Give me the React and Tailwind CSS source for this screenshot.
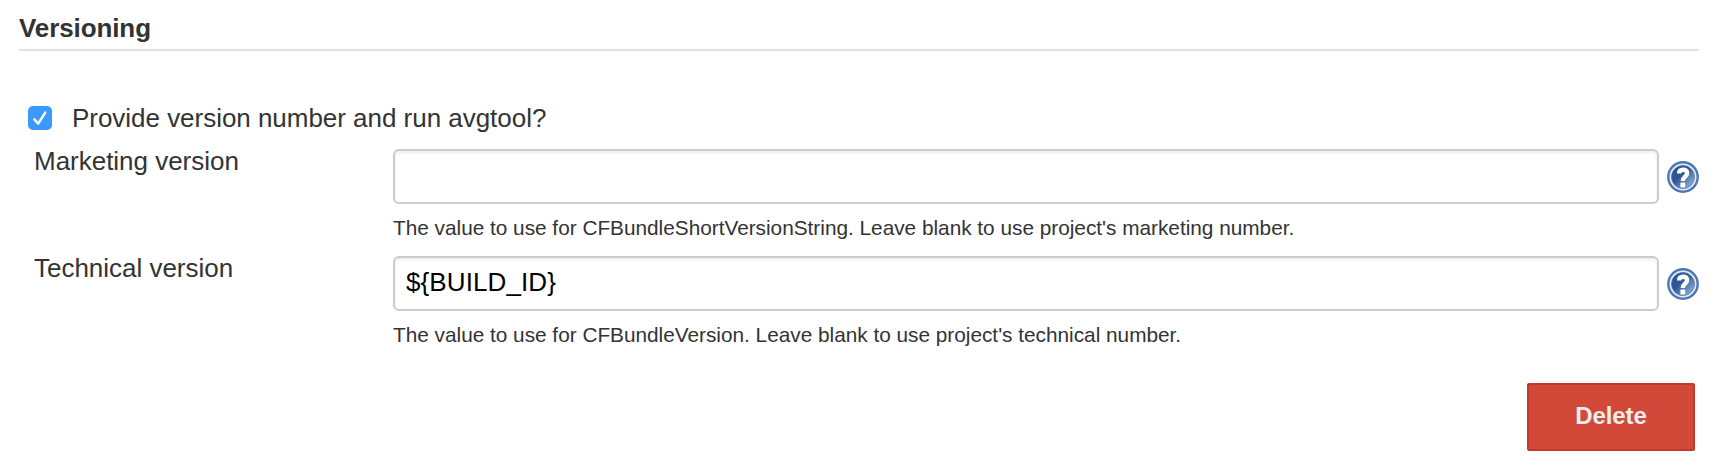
function HelpIcon({ id }) {
  return (
    <svg viewBox="0 0 32 32" className="block h-8 w-8">
      <defs>
        <linearGradient id={id} x1="0.1" y1="0.1" x2="0.9" y2="0.9">
          <stop offset="0" stopColor="#2c5291" />
          <stop offset="0.4" stopColor="#2f5795" />
          <stop offset="1" stopColor="#8fb2de" />
        </linearGradient>
      </defs>
      <circle cx="16" cy="16" r="14.7" fill="#e6edf7" stroke="#4f77b2" strokeWidth="2.4" />
      <circle cx="16" cy="16" r="11.5" fill={`url(#${id})`} stroke="#4a72ae" strokeWidth="0.8" />
      <path
        d="M12.1 12.6C12.1 9.8 13.8 8.8 16 8.8c2.6 0 4.1 1.3 4.1 3.5 0 3.4-4.3 3.4-4.3 7.6"
        fill="none"
        stroke="#fff"
        strokeWidth="4.4"
      />
      <rect x="13.4" y="21.6" width="4.8" height="4.8" rx="0.6" fill="#fff" />
    </svg>
  );
}

function VersionRow({ id, label, value, help }) {
  return (
    <div className="flex h-[107px] items-start">
      <label htmlFor={id} className="w-[359px] shrink-0 text-[26px] leading-8 tracking-[-0.02px] text-[#333]">
        {label}
      </label>
      <div className="w-[1266px] pt-1">
        <input
          id={id}
          defaultValue={value}
          className="block h-[55px] w-full rounded-[6px] border-2 border-[#ccc] bg-white px-[11px] pb-[3px] text-[26px] tracking-[0.1px] text-black shadow-[inset_0_2px_3px_rgba(0,0,0,0.075)] outline-none"
        />
        <p className="mt-[11px] text-[20.8px] leading-[26px] tracking-[-0.01px] whitespace-nowrap text-[#333]">{help}</p>
      </div>
      <div className="pt-4 pl-2">
        <HelpIcon id={`${id}-gradient`} />
      </div>
    </div>
  );
}

export default function App() {
  return (
    <main className="h-[472px] w-[1730px] overflow-hidden bg-white pr-[31px] pl-[19px] font-['Liberation_Sans',Arial,sans-serif]">
      <h2 className="h-[51px] border-b-2 border-[#e0e0e0] pt-3 text-[26px] leading-8 font-bold tracking-[-0.1px] text-[#333]">
        Versioning
      </h2>
      <div className="mt-[51px] flex h-[43px] items-start pl-[9px]">
        <span role="checkbox" aria-checked="true" className="mt-1 h-6 w-6 rounded-[5px] bg-[#3b99fc]">
          <svg viewBox="0 0 24 24" className="block h-6 w-6">
            <path
              d="M6.4 13.4l3.8 4.2L17.2 6.6"
              fill="none"
              stroke="#fff"
              strokeWidth="2.5"
              strokeLinecap="round"
              strokeLinejoin="round"
            />
          </svg>
        </span>
        <span className="pl-5 text-[26px] leading-8 tracking-[-0.03px] text-[#333]">
          Provide version number and run avgtool?
        </span>
      </div>
      <div className="pl-[15px]">
        <VersionRow
          id="marketing"
          label="Marketing version"
          value=""
          help="The value to use for CFBundleShortVersionString. Leave blank to use project's marketing number."
        />
        <VersionRow
          id="technical"
          label="Technical version"
          value="${BUILD_ID}"
          help="The value to use for CFBundleVersion. Leave blank to use project's technical number."
        />
      </div>
      <div className="flex justify-end pt-6 pr-1">
        <button className="h-[68px] w-[168px] rounded-[2px] border-2 border-[#c0392b] bg-[#d24939] pb-[2px] text-[24px] font-bold tracking-[-0.1px] text-[#eee]">
          Delete
        </button>
      </div>
    </main>
  );
}
